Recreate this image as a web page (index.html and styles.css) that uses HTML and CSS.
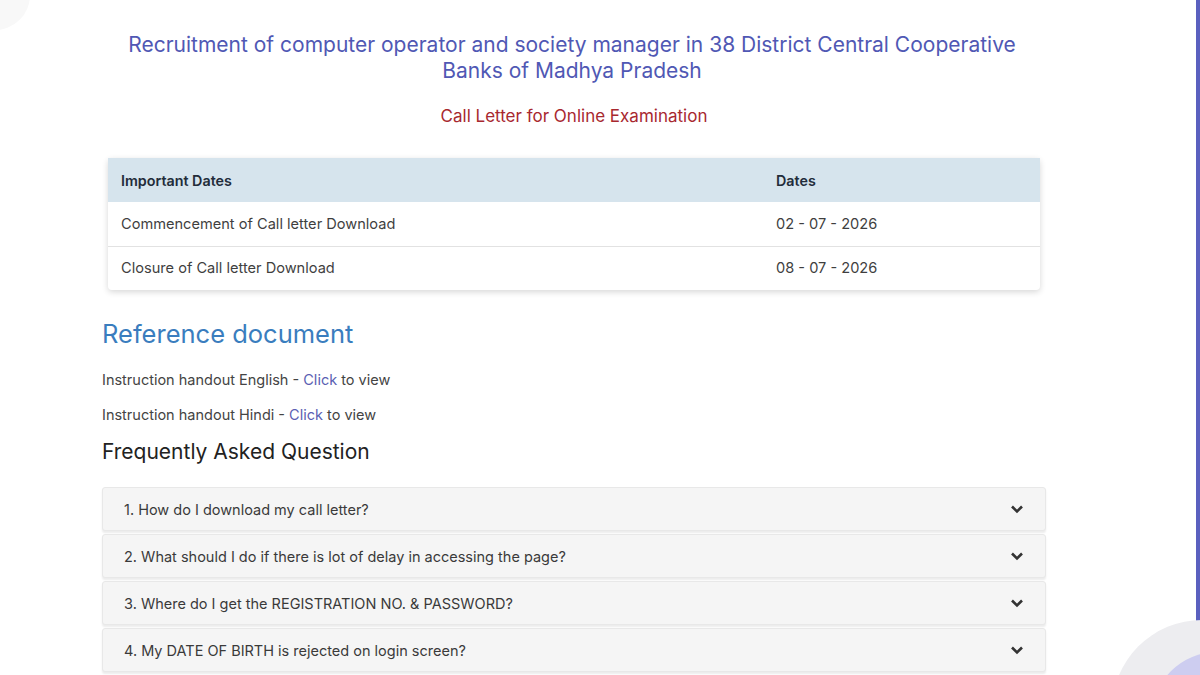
FILE: index.html
```html
<!DOCTYPE html>
<html lang="en">

<head>
    <meta charset="UTF-8">
    <meta name="viewport" content="width=device-width, initial-scale=1.0">
    <title>Call Letter for Online Examination</title>
    <link rel="stylesheet" href="styles.css">
</head>

<body>
    <div class="blob-top"></div>
    <div class="blob-bottom"><div class="blob-inner"></div></div>

    <div class="container">
        <h1 class="title">Recruitment of computer operator and society manager in 38 District Central Cooperative Banks of Madhya Pradesh</h1>
        <h2 class="subtitle">Call Letter for Online Examination</h2>

        <table class="dates">
            <thead>
                <tr>
                    <th>Important Dates</th>
                    <th class="col-date">Dates</th>
                </tr>
            </thead>
            <tbody>
                <tr>
                    <td>Commencement of Call letter Download</td>
                    <td class="col-date">02 - 07 - 2026</td>
                </tr>
                <tr>
                    <td>Closure of Call letter Download</td>
                    <td class="col-date">08 - 07 - 2026</td>
                </tr>
            </tbody>
        </table>

        <h3 class="ref-title">Reference document</h3>
        <p class="ref-line">Instruction handout English - <a href="#">Click</a> to view</p>
        <p class="ref-line">Instruction handout Hindi - <a href="#">Click</a> to view</p>

        <h3 class="faq-title">Frequently Asked Question</h3>
        <div class="faq">
            <div class="faq-item"><span>1. How do I download my call letter?</span><svg class="chev" viewBox="0 0 14 10"><path d="M2 2.5l5 5 5-5"/></svg></div>
            <div class="faq-item"><span>2. What should I do if there is lot of delay in accessing the page?</span><svg class="chev" viewBox="0 0 14 10"><path d="M2 2.5l5 5 5-5"/></svg></div>
            <div class="faq-item"><span>3. Where do I get the REGISTRATION NO. &amp; PASSWORD?</span><svg class="chev" viewBox="0 0 14 10"><path d="M2 2.5l5 5 5-5"/></svg></div>
            <div class="faq-item"><span>4. My DATE OF BIRTH is rejected on login screen?</span><svg class="chev" viewBox="0 0 14 10"><path d="M2 2.5l5 5 5-5"/></svg></div>
        </div>
    </div>
</body>

</html>
```

FILE: styles.css
```css
html, body {
    height: 100%;
    overflow: hidden;
}

body {
    margin: 0;
    background-color: #FFFFFF;
    font-family: Inter, "Noto Sans", sans-serif;
    color: #444444;
    border-right: 4px solid #5A60BF;
}

.blob-top {
    position: absolute;
    left: -40px;
    top: -40px;
    width: 70px;
    height: 70px;
    border-radius: 50%;
    background-color: #F8F8F8;
}

.blob-bottom {
    position: absolute;
    left: 1112px;
    top: 620px;
    width: 180px;
    height: 180px;
    border-radius: 50%;
    background-color: #EDEDF0;
}

.blob-inner {
    position: absolute;
    left: 40px;
    top: 32px;
    width: 130px;
    height: 130px;
    border-radius: 50%;
    background-color: #CDCDF0;
}

.container {
    position: relative;
    width: 944px;
    margin-left: 102px;
    padding-top: 32px;
}

.title {
    margin: 0 14px 0 10px;
    text-align: center;
    font-size: 21px;
    font-weight: 400;
    line-height: 26px;
    color: #5058B4;
}

.subtitle {
    margin: 20px 0 0;
    text-align: center;
    font-size: 17px;
    font-weight: 400;
    line-height: 24px;
    color: #A8282F;
}

.dates {
    width: 932px;
    margin: 30px 6px 0;
    border-collapse: collapse;
    background-color: #FFFFFF;
    box-shadow: 0 2px 6px rgba(0, 0, 0, 0.16);
    border-radius: 4px;
    font-size: 14.6px;
}

.dates th,
.dates td {
    height: 44px;
    padding: 0 13px;
    text-align: left;
    box-sizing: border-box;
}

.dates th {
    background-color: #D6E4ED;
    color: #222C3A;
    font-weight: 600;
    font-size: 14.3px;
}

.dates td {
    color: #3F3F3F;
}

.dates tbody tr + tr td {
    border-top: 1px solid #E2E2E2;
}

.dates .col-date {
    width: 277px;
}

.ref-title {
    margin: 29px 0 0;
    font-size: 25.5px;
    font-weight: 400;
    line-height: 30px;
    color: #3A7DBE;
}

.ref-line {
    margin: 0;
    padding-top: 21px;
    font-size: 14.5px;
    line-height: 20px;
    color: #444444;
}

.ref-line + .ref-line {
    padding-top: 15px;
}

.ref-line a {
    color: #5B5FB3;
    text-decoration: none;
}

.faq-title {
    margin: 14px 0 0;
    font-size: 21px;
    font-weight: 400;
    line-height: 26px;
    color: #222222;
}

.faq {
    display: flex;
    flex-direction: column;
    gap: 3px;
    margin-top: 22px;
}

.faq-item {
    display: flex;
    align-items: center;
    justify-content: space-between;
    height: 44px;
    padding: 0 21px;
    box-sizing: border-box;
    background-color: #F5F5F5;
    border: 1px solid #E8E8E8;
    border-radius: 3px;
    box-shadow: 0 2px 2px rgba(0, 0, 0, 0.08);
    font-size: 14.5px;
    color: #3A3A3A;
}

.chev {
    width: 14px;
    height: 10px;
    fill: none;
    stroke: #333333;
    stroke-width: 2.6;
}
```
